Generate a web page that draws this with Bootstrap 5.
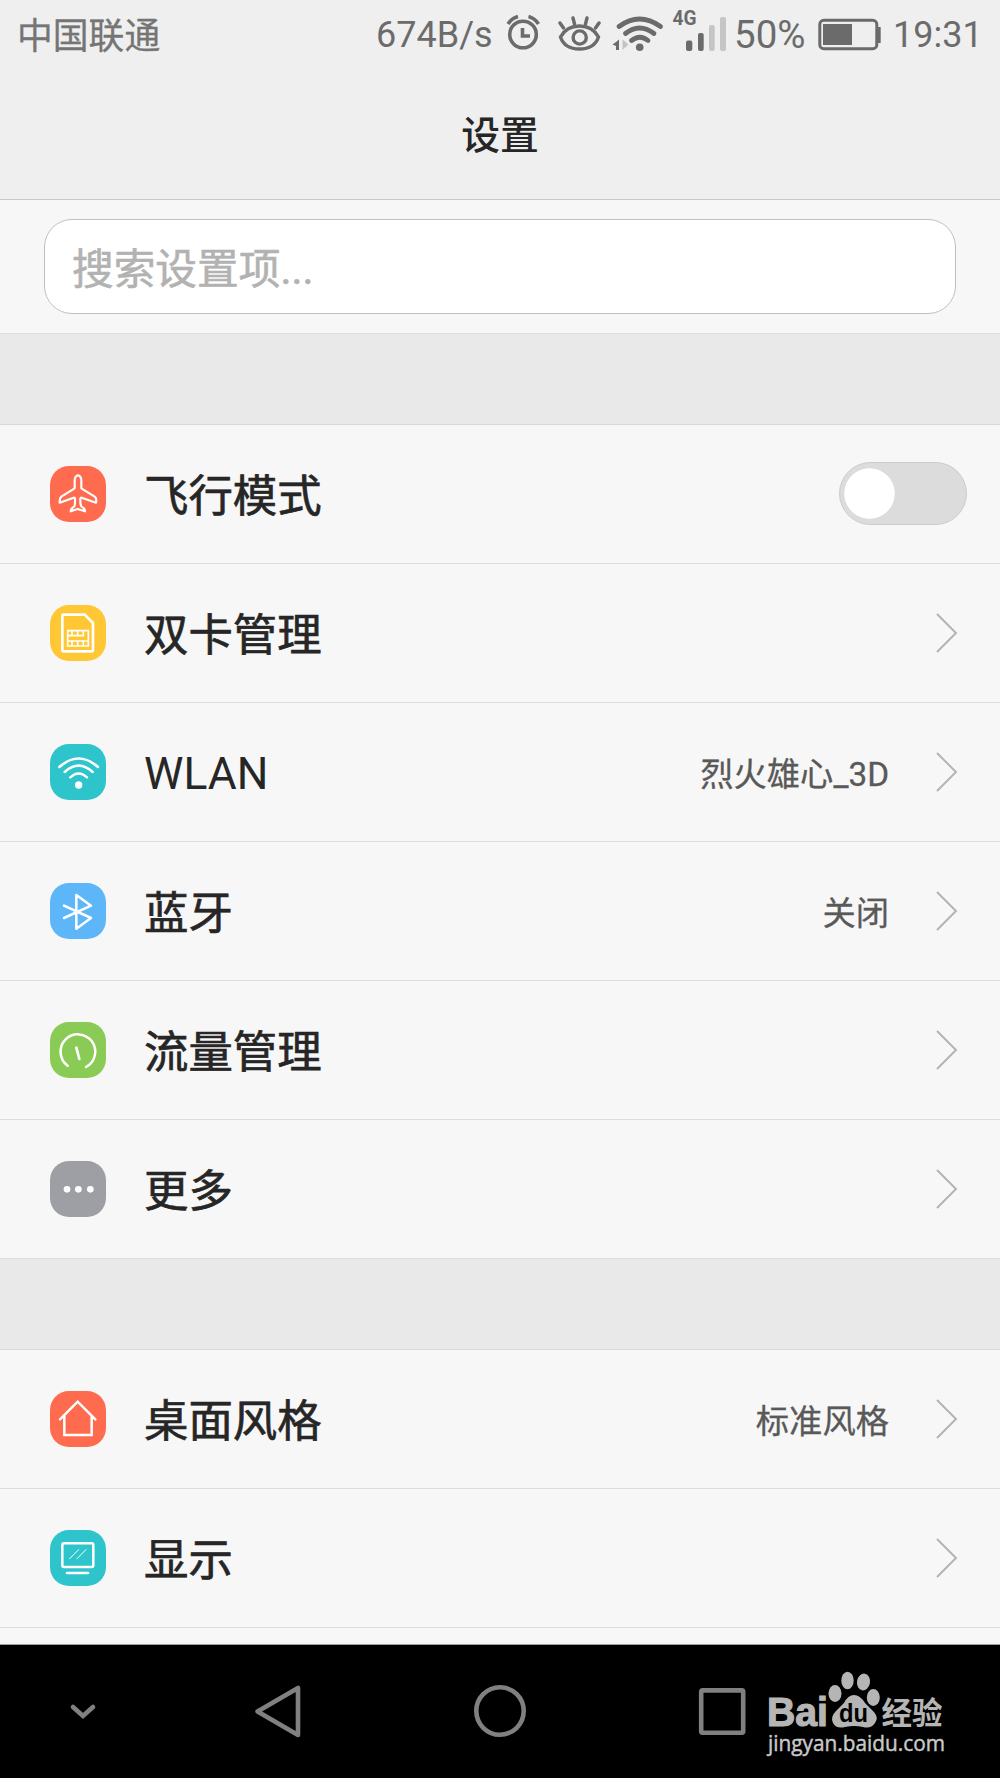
<!DOCTYPE html>
<html lang="zh-CN">
<head>
<meta charset="utf-8">
<meta name="viewport" content="width=device-width, initial-scale=1">
<title>设置</title>
<link href="https://cdn.jsdelivr.net/npm/bootstrap@5.3.0/dist/css/bootstrap.min.css" rel="stylesheet">
<style>
body{background:#f7f7f7;color:#262626;font-family:Roboto,"Noto Sans CJK SC",sans-serif;overflow:hidden}
svg{display:block;flex:none}
.screen{width:1000px;height:1778px;overflow:hidden}
.top-area{height:200px;background:#efefef;border-bottom:1px solid #c8c8c8}
.status{height:70px;padding-left:17px;color:#6b6b6b;line-height:70px;font-size:36px;white-space:nowrap}
.status .carrier{width:359px;font-size:35.8px;color:#757575;padding-top:2px;-webkit-text-stroke:.3px #757575}
.status .speed{width:130px}
.status .pct{width:83px;font-size:38.5px}
.title-text{height:129px;line-height:129px;font-size:38.8px;font-weight:500;padding-top:1px}
.search-area{height:134px;padding:19px 44px 0;border-bottom:1px solid #dedede}
.search-area .form-control{height:95px;border:1px solid #bfbfbf;border-radius:28px;background:#fff;padding:5px 27px 0 27px;font-size:41.7px;-webkit-text-stroke:.6px #b2b2b2}
.search-area .form-control::placeholder{color:#b2b2b2;opacity:1}
.gap-band{height:91px;background:#e9e9e9;border-bottom:1px solid #d9d9d9}
.list-group .setting.list-group-item{height:139px;padding:0 0 1px 50px;border:0;border-bottom:1px solid #dcdcdc;background:#f7f7f7;color:#262626}
.list-group-flush>.setting.list-group-item:last-child{border-bottom-width:1px}
.tile{width:56px;height:56px;border-radius:19px;overflow:hidden}
.tile svg{fill:none;stroke:#fff;stroke-width:7.5;stroke-linecap:round;stroke-linejoin:round}
.c-red{background:#ff6b4e}.c-yellow{background:#ffc734}.c-teal{background:#2dc4cb}.c-blue{background:#5cb6f8}.c-green{background:#89cb55}.c-gray{background:#9e9fa5}
.label-text{margin-left:38px;font-size:44.4px;line-height:60px;padding-top:7px;-webkit-text-stroke:.7px #262626}
.label-text.latin{padding-top:5px;-webkit-text-stroke:0}
.value-text{margin-right:46px;font-size:33.3px;line-height:50px;color:#595959;padding-top:6px;-webkit-text-stroke:.3px #595959}
.chev{margin-right:42px}
.form-switch.big{padding:0;margin:0 33px 0 0;min-height:0}
.form-switch.big .form-check-input{width:128px;height:63px;margin:0;float:none;display:block;border:1px solid #ccc;background-color:#dcdcdc;background-image:radial-gradient(circle at 29.5px 30.5px,#fff 24.8px,transparent 25.6px);background-size:auto;background-position:0 0;border-radius:32px}
.tail{height:17px;border-bottom:1px solid #9aa09d}
.navkeys{height:133px;background:#000}
.navkeys .key{fill:none;stroke:#808080;stroke-width:4.6;stroke-linejoin:round}
</style>
</head>
<body>
<div class="screen">
<header class="top-area">
  <div class="status d-flex">
    <span class="carrier">中国联通</span>
    <span class="speed">674B/s</span>
    <svg width="52" height="70" viewBox="506 0 52 70" fill="none" stroke="#6b6b6b" stroke-width="3.6"><circle cx="523" cy="34.5" r="13.3"/><path d="M522.500 28v8h7.500M508 24q4-6 10-7.500M538.500 24q-4-6-10-7.500"/></svg>
    <svg width="54" height="70" viewBox="558 0 54 70" fill="none" stroke="#6b6b6b" stroke-width="3.4" stroke-linecap="round"><path d="M560.500 37q6-11 19-11t19 11q-4 12-19 12t-19-12Z"/><circle cx="579.700" cy="37.500" r="6.600"/><path d="M563.500 28l-3.500-5M574.500 24l-1.500-6M585.500 24l1.500-6M595.500 28l3.500-5"/></svg>
    <svg width="60" height="70" viewBox="612 0 60 70" fill="none" stroke="#6b6b6b" stroke-width="4.800" stroke-linecap="round"><path d="M619 26.500q20.500-15 41.500 0M625.500 33.500q14-11 28.500 0M631.500 40.500q8.500-6.500 16.500 0"/><circle cx="639.700" cy="47.300" r="3.800" fill="#6b6b6b" stroke="none"/><path d="M619 39.500v10.500h-3v-4l-3.500-1.500 3.500-2.500Z" fill="#6b6b6b" stroke="none"/><path d="M622.500 39.500l6 5-6 5.500Z" fill="#c4c4c4" stroke="none"/></svg>
    <svg width="62" height="70" viewBox="672 0 62 70" fill="#6b6b6b"><text x="672.500" y="25" font-size="19.500" font-weight="700" font-family="Roboto,sans-serif" textLength="24" lengthAdjust="spacingAndGlyphs">4G</text><rect x="686" y="40.500" width="6.300" height="10.500" rx="2"/><rect x="698" y="33" width="5.700" height="18" rx="2"/><rect x="709" y="25" width="5.700" height="26" rx="2" fill="#c5c5c5"/><rect x="720" y="17" width="6" height="34" rx="2" fill="#c5c5c5"/></svg>
    <span class="pct">50%</span>
    <svg width="76" height="70" viewBox="817 0 76 70"><rect x="819.800" y="20.300" width="57" height="28.400" rx="4" fill="none" stroke="#6b6b6b" stroke-width="3"/><path d="M823 24h29v21h-29ZM878 27h2.700v16h-2.700Z" fill="#6b6b6b"/></svg>
    <span>19:31</span>
  </div>
  <h1 class="title-text text-center m-0">设置</h1>
</header>
<div class="search-area"><input class="form-control" type="text" placeholder="搜索设置项..." aria-label="搜索设置项"></div>
<div class="gap-band"></div>
<main>
<div class="list-group list-group-flush">
  <div class="setting list-group-item d-flex align-items-center">
    <span class="tile c-red"><svg width="56" height="56" viewBox="60 78 168 168"><path stroke-width="6.500" d="M144 106q-10 3-10 16v23l-40 25q-6 5-5 18l42-15q5 0 4 8 0 15-2 18-10 6-11 15l21-7 22 7q0-9-11-15-3-4-3-18-1-8 4-8l43 15q3-13-4-18l-40-25v-23q0-13-10-16Z"/></svg></span>
    <span class="label-text me-auto">飞行模式</span>
    <div class="form-check form-switch big"><input class="form-check-input" type="checkbox" role="switch" aria-label="飞行模式"></div>
  </div>
  <div class="setting list-group-item d-flex align-items-center">
    <span class="tile c-yellow"><svg width="56" height="56" viewBox="60 494 168 168"><path stroke-width="8" d="M101 523h63l25 25v80q0 5-5 5h-83q-4 0-4-4V527q0-4 4-4Z"/><path stroke-width="5" stroke-linejoin="miter" d="M113 571h62v46h-62ZM113 586h47M113 602h62"/><path stroke-width="5" stroke-linecap="butt" d="M126 571v15M143 571v15M160 571v15M126 602v15M143 602v15M160 602v15"/></svg></span>
    <span class="label-text me-auto">双卡管理</span>
    <svg class="chev" width="23" height="42" fill="none" stroke="#b2b2b2" stroke-width="1.900"><path d="M2 2l19 19-19 19"/></svg>
  </div>
  <div class="setting list-group-item d-flex align-items-center">
    <span class="tile c-teal"><svg width="56" height="56" viewBox="60 70 168 168"><path d="M88 139q58-51 116 0M104 154q42-38 84 0M121 170q25-23 50 0"/><circle cx="146" cy="193" r="11" fill="#fff" stroke="none"/></svg></span>
    <span class="label-text latin me-auto">WLAN</span><span class="value-text">烈火雄心_3D</span>
    <svg class="chev" width="23" height="42" fill="none" stroke="#b2b2b2" stroke-width="1.900"><path d="M2 2l19 19-19 19"/></svg>
  </div>
  <div class="setting list-group-item d-flex align-items-center">
    <span class="tile c-blue"><svg width="56" height="56" viewBox="60 487 168 168"><path d="M102 555l81 37-44 32V523l44 32-81 37"/></svg></span>
    <span class="label-text me-auto">蓝牙</span><span class="value-text">关闭</span>
    <svg class="chev" width="23" height="42" fill="none" stroke="#b2b2b2" stroke-width="1.900"><path d="M2 2l19 19-19 19"/></svg>
  </div>
  <div class="setting list-group-item d-flex align-items-center">
    <span class="tile c-green"><svg width="56" height="56" viewBox="60 64 168 168"><path d="M113 195A52 52 0 1 1 168 199"/><path stroke-width="8" d="M139 141l9 34"/></svg></span>
    <span class="label-text me-auto">流量管理</span>
    <svg class="chev" width="23" height="42" fill="none" stroke="#b2b2b2" stroke-width="1.900"><path d="M2 2l19 19-19 19"/></svg>
  </div>
  <div class="setting list-group-item d-flex align-items-center">
    <span class="tile c-gray"><svg width="56" height="56" viewBox="60 481 168 168"><g fill="#fff" stroke="none"><circle cx="111" cy="566" r="10"/><circle cx="145" cy="566" r="10"/><circle cx="181" cy="566" r="10"/></g></svg></span>
    <span class="label-text me-auto">更多</span>
    <svg class="chev" width="23" height="42" fill="none" stroke="#b2b2b2" stroke-width="1.900"><path d="M2 2l19 19-19 19"/></svg>
  </div>
</div>
<div class="gap-band"></div>
<div class="list-group list-group-flush">
  <div class="setting list-group-item d-flex align-items-center">
    <span class="tile c-red"><svg width="56" height="56" viewBox="60 153 168 168"><path stroke-linejoin="miter" d="M90 238l53-53 53 53M103 228v57h82v-57"/></svg></span>
    <span class="label-text me-auto">桌面风格</span><span class="value-text">标准风格</span>
    <svg class="chev" width="23" height="42" fill="none" stroke="#b2b2b2" stroke-width="1.900"><path d="M2 2l19 19-19 19"/></svg>
  </div>
  <div class="setting list-group-item d-flex align-items-center">
    <span class="tile c-teal"><svg width="56" height="56" viewBox="60 569 168 168"><rect x="97" y="609" width="93" height="71" rx="5"/><path stroke-width="8" d="M111 698h63"/><path stroke-width="3" d="M119 655l27-27M141 655l27-27"/></svg></span>
    <span class="label-text me-auto">显示</span>
    <svg class="chev" width="23" height="42" fill="none" stroke="#b2b2b2" stroke-width="1.900"><path d="M2 2l19 19-19 19"/></svg>
  </div>
</div>
</main>
<div class="tail"></div>
<nav class="navkeys d-flex">
  <svg width="250" height="133" viewBox="0 1645 250 133" class="key"><path stroke-linecap="round" stroke-linejoin="miter" d="M73 1707l10 9 10-9"/></svg>
  <svg width="220" height="133" viewBox="250 1645 220 133" class="key"><path d="M257.500 1711.500l40.500-23.500v47Z"/></svg>
  <svg width="220" height="133" viewBox="470 1645 220 133" class="key"><circle cx="500" cy="1711" r="23.700"/></svg>
  <svg width="70" height="133" viewBox="690 1645 70 133" class="key"><rect x="701.200" y="1690.400" width="42" height="42.300" rx="1.500"/></svg>
  <svg width="240" height="133" viewBox="760 1645 240 133" fill="#b5b5b5" role="img" aria-label="Baidu 经验">
    <text x="767" y="1726" font-family="Liberation Sans,sans-serif" font-weight="700" font-size="40" stroke="#b5b5b5" stroke-width="1.200" textLength="61" lengthAdjust="spacingAndGlyphs">Bai</text>
    <ellipse cx="835" cy="1693.500" rx="6.500" ry="8.500"/><ellipse cx="847.500" cy="1680.500" rx="6.200" ry="8.800"/><ellipse cx="863.500" cy="1682" rx="6.500" ry="8.500" transform="rotate(10 863.500 1682)"/><ellipse cx="873.300" cy="1697.500" rx="6.500" ry="8.500"/>
    <path d="M854 1695q6 0 11 8l9 9q5 6 1 11-4 6-12 4-9-2-18 0-9 2-12-4-3-6 3-12l8-8q4-8 10-8Z"/>
    <text x="839" y="1722" font-family="Liberation Sans,sans-serif" font-weight="700" font-size="26" fill="#000" textLength="29" lengthAdjust="spacingAndGlyphs">du</text>
    <text x="881.500" y="1723.500" font-family="Noto Sans CJK SC,sans-serif" font-weight="700" font-size="30.500">经验</text>
    <text x="768" y="1751" font-family="Open Sans,sans-serif" font-size="21.500" fill="#c9c9c9" stroke="#c9c9c9" stroke-width=".45" textLength="177" lengthAdjust="spacingAndGlyphs">jingyan.baidu.com</text>
  </svg>
</nav>
</div>
<script src="https://cdn.jsdelivr.net/npm/bootstrap@5.3.0/dist/js/bootstrap.bundle.min.js"></script>
</body>
</html>
